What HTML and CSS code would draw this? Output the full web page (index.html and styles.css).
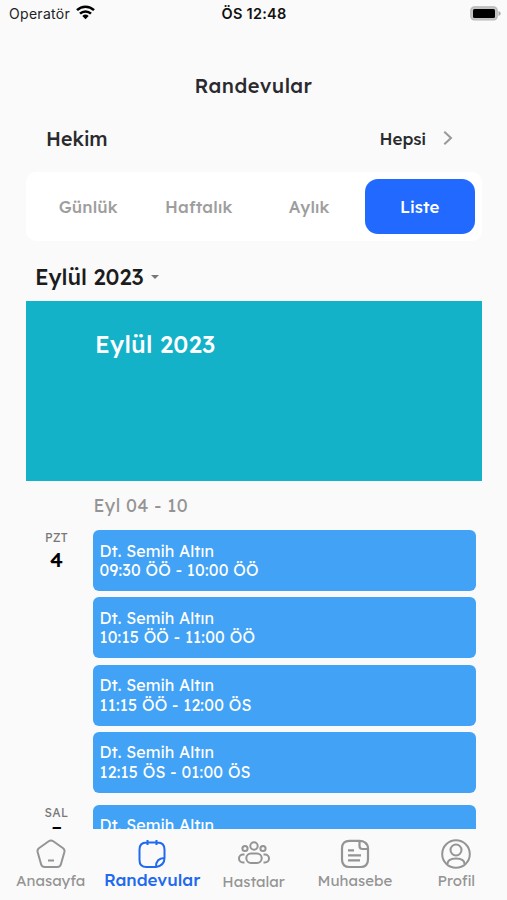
FILE: index.html
```html
<!DOCTYPE html>
<html lang="tr">
<head>
<meta charset="utf-8">
<title>Randevular</title>
<link rel="stylesheet" href="styles.css">
</head>
<body>
<div class="app">
  <header class="status">
    <div class="carrier"><span>Operatör</span>
      <svg width="19" height="15" viewBox="0 0 19 15" fill="none" stroke="#000" stroke-width="2.5"><path d="M1 5.2a12.2 12.2 0 0 1 17 0M4 8.7a7.8 7.8 0 0 1 11 0"/><path d="M6.3 11a4.7 4.7 0 0 1 6.4 0L9.500 14.200z" fill="#000" stroke="none"/></svg>
    </div>
    <span class="clock">ÖS 12:48</span>
    <svg class="battery" width="31" height="15" viewBox="0 0 31 15"><rect x=".8" y=".8" width="26.400" height="13.200" rx="3.600" fill="#c4c4c4" stroke="#b8b8b8" stroke-width="1.200"/><rect x="3" y="3" width="22" height="9" rx="1.500" fill="#000"/><path d="M28.500 5v5q2.200-.8 2.200-2.500T28.500 5z" fill="#a6a6a6"/></svg>
  </header>
  <h1 class="title">Randevular</h1>
  <div class="doctor">
    <span class="doctor-label">Hekim</span>
    <span class="doctor-value">Hepsi</span>
    <svg width="10" height="16" viewBox="0 0 10 16" fill="none" stroke="#999" stroke-width="2"><path d="M1.300 1.700L8 8l-6.700 6.300"/></svg>
  </div>
  <nav class="tabs">
    <span class="tab">Günlük</span><span class="tab">Haftalık</span><span class="tab">Aylık</span><span class="tab active">Liste</span>
  </nav>
  <div class="month"><span>Eylül 2023</span><i class="caret"></i></div>
  <main class="schedule">
    <div class="banner"><span>Eylül 2023</span></div>
    <div class="week"><span>Eyl 04 - 10</span></div>
    <section class="day">
      <div class="date"><span class="weekday">PZT</span><span class="number">4</span></div>
      <div class="events">
        <article class="event"><span class="who">Dt. Semih Altın</span><span class="time">09:30 ÖÖ - 10:00 ÖÖ</span></article>
        <article class="event"><span class="who">Dt. Semih Altın</span><span class="time">10:15 ÖÖ - 11:00 ÖÖ</span></article>
        <article class="event"><span class="who">Dt. Semih Altın</span><span class="time">11:15 ÖÖ - 12:00 ÖS</span></article>
        <article class="event"><span class="who">Dt. Semih Altın</span><span class="time">12:15 ÖS - 01:00 ÖS</span></article>
      </div>
    </section>
    <section class="day">
      <div class="date"><span class="weekday">SAL</span><span class="number next">5</span></div>
      <div class="events">
        <article class="event"><span class="who">Dt. Semih Altın</span></article>
      </div>
    </section>
  </main>
  <footer class="bottom">
    <div class="item home">
      <svg width="32" height="32" viewBox="0 0 32 32"><path d="M13.700 3.300 4.200 10Q2 11.600 2.600 14l3.500 12.300q.7 2.700 3.500 2.700h12.800q2.800 0 3.500-2.700L29.400 14q.6-2.400-1.600-4l-9.500-6.700q-2.300-1.600-4.600 0zM13 22.600h6"/></svg>
      <span>Anasayfa</span>
    </div>
    <div class="item current">
      <svg width="32" height="32" viewBox="0 0 32 32"><path d="M20 29H10.500q-7 0-7-7V11.500q0-7 7-7h11q7 0 7 7V20M11.500 2v5M20.500 2v5M28.500 20q0 7.500-8.500 9 0-9 8.500-9z"/></svg>
      <span>Randevular</span>
    </div>
    <div class="item patients">
      <svg width="32" height="32" viewBox="0 0 32 32"><circle cx="16" cy="8" r="3.700"/><circle cx="7" cy="10.500" r="2.600"/><circle cx="25" cy="10.500" r="2.600"/><rect x="8.300" y="15.500" width="15.400" height="9.500" rx="4.700"/><path d="M6.500 16.500H5a4 4 0 0 0 0 8h1.500M25.500 16.500H27a4 4 0 0 1 0 8h-1.500"/></svg>
      <span>Hastalar</span>
    </div>
    <div class="item money">
      <svg width="32" height="32" viewBox="0 0 32 32"><path d="M20.500 2.800H10.500q-7.500 0-7.500 7.500v11.200Q3 29 10.500 29h11q7.500 0 7.500-7.500v-11q0-4-3-6-2-1.700-5.500-1.700zM20.500 2.800V8q0 3 3 3H29M9 12.300h6M9 17.300h13M9 22.300h12" stroke-width="2.200"/></svg>
      <span>Muhasebe</span>
    </div>
    <div class="item profile">
      <svg width="32" height="32" viewBox="0 0 32 32"><circle cx="16" cy="16" r="13.800"/><circle cx="16" cy="12" r="5.500"/><path d="M7.500 26q0-5.500 8.500-5.500t8.500 5.500"/></svg>
      <span>Profil</span>
    </div>
  </footer>
</div>
</body>
</html>
```

FILE: styles.css
```css
* { box-sizing: border-box; }
body { margin: 0; background: #fafafa; }
.app {
  width: 507px; height: 900px; overflow: hidden;
  display: flex; flex-direction: column;
  font-family: Lexend, Inter, "Open Sans", sans-serif;
  font-weight: 400; color: #2a2a2e; white-space: nowrap;
}
.status {
  height: 27px; padding: 0 6px 0 9px; flex: none;
  display: grid; grid-template-columns: 1fr auto 1fr; align-items: center;
  font-family: Inter, sans-serif;
  font-size: 14px; color: #222;
}
.carrier { display: flex; align-items: center; gap: 6px; letter-spacing: .3px; }
.carrier svg { margin-top: -2px; }
.clock { font-weight: 600; font-size: 14.500px; letter-spacing: .25px; color: #111; margin-right: 2px; }
.battery { justify-self: end; margin-top: -1px; }
.title { margin: 44px 0 0; height: 30px; line-height: 30px; text-align: center; font-size: 20px; font-weight: 500; letter-spacing: .45px; }
.doctor { margin-top: 22px; height: 30px; padding: 0 54px 0 46px; display: flex; align-items: center; font-weight: 500; }
.doctor-label { font-size: 19.500px; letter-spacing: .1px; flex: 1; padding-top: 1px; }
.doctor-value { font-size: 17px; margin-right: 17px; padding-top: 1px; }
.tabs {
  margin: 19px 25px 0 26px; height: 69px; padding: 7px; flex: none;
  display: grid; grid-template-columns: repeat(4, 1fr);
  background: #fff; border-radius: 10px;
}
.tab { display: flex; align-items: center; justify-content: center; height: 55px; font-size: 16.800px; font-weight: 500; color: #9e9e9e; letter-spacing: .15px; border-radius: 13px; }
.tab.active { background: #2169ff; color: #fff; }
.month { height: 60px; padding: 11px 0 0 35px; display: flex; flex: none; align-items: center; gap: 7px; font-size: 22px; font-weight: 500; color: #1c1c1c; }
.caret { border: 4.500px solid transparent; border-top-color: #777; border-bottom: 0; }
.schedule { height: 528px; flex: none; overflow: hidden; }
.banner { margin: 0 25px 0 26px; height: 180px; padding: 27px 0 0 69px; background: #14b2c9; color: #fff; font-size: 23.800px; font-weight: 500; letter-spacing: .3px; line-height: 32px; }
.week { height: 49px; padding-left: 93.500px; line-height: 50px; font-size: 18px; color: #949494; letter-spacing: .4px; }
.day { display: flex; padding-right: 31px; margin-bottom: 12px; }
.date { width: 93px; padding-left: 20px; display: flex; flex-direction: column; align-items: center; }
.weekday { font-size: 12px; line-height: 16px; color: #777; letter-spacing: .3px; }
.number { font-size: 21px; line-height: 27px; font-weight: 500; color: #000; }
.number.next { line-height: 25px; }
.events { flex: 1; display: flex; flex-direction: column; gap: 6.300px; }
.event { height: 61px; padding: 11.500px 0 0 6.500px; border-radius: 6px; background: #42a2f5; color: #fff; font-size: 16px; line-height: 19.500px; display: flex; flex-direction: column; align-items: flex-start; }
.who { letter-spacing: .12px; }
.time { letter-spacing: .2px; }
.bottom { height: 71px; flex: none; display: flex; color: #949494; }
.item { display: flex; flex-direction: column; align-items: center; font-size: 15px; padding-top: 9px; width: 101.500px; }
.item svg { fill: none; stroke: currentColor; stroke-width: 2; stroke-linejoin: round; flex: none; }
.item span { line-height: 22px; }
.patients span { line-height: 24px; }
.current { color: #2169ee; font-size: 17px; font-weight: 500; }
.current span { line-height: 19px; }
```
